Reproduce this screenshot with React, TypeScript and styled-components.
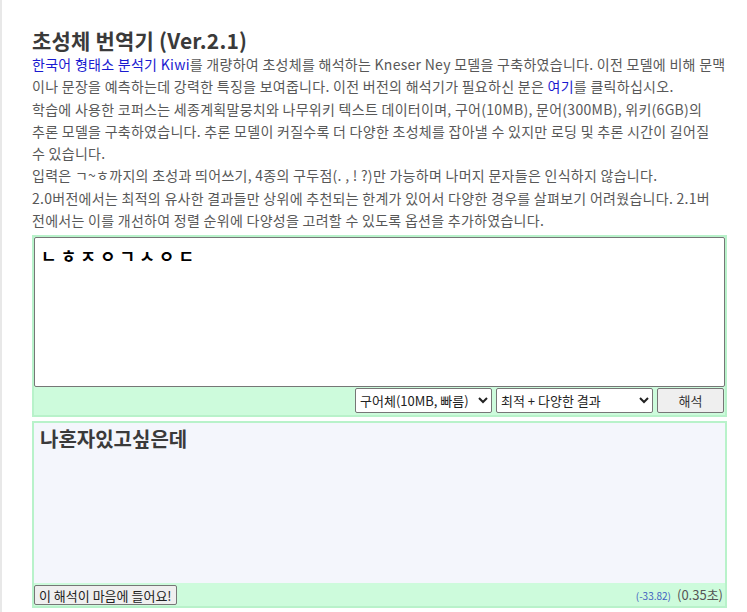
import React from 'react';
import styled, { createGlobalStyle } from 'styled-components';

const GlobalStyle = createGlobalStyle`
  html, body {
    margin: 0;
    padding: 0;
    background: #fff;
  }
  body {
    font-family: "Noto Sans CJK KR", "Noto Sans", sans-serif;
  }
`;

const Page = styled.div`
  min-height: 612px;
  box-sizing: border-box;
  border-left: 2px solid #e8e8e8;
  padding: 27px 20px 0 30px;
`;

const Content = styled.div`
  width: 695px;
`;

const Title = styled.h1`
  margin: 0;
  font-size: 21px;
  line-height: 26px;
  font-weight: bold;
  letter-spacing: 0.2px;
  color: #3a3a3a;
`;

const Intro = styled.div`
  font-size: 14px;
  line-height: 22.3px;
  color: #585858;
  letter-spacing: 0.28px;
`;

const Line = styled.span`
  display: block;
  white-space: nowrap;
`;

const Link = styled.a`
  color: #1a1ad0;
  text-decoration: none;
`;

const Panel = styled.div`
  margin-top: 4px;
  background: #cdfbdc;
  border: 2px solid #b8f2ca;
  box-sizing: border-box;
`;

const Input = styled.textarea`
  display: block;
  box-sizing: border-box;
  width: 100%;
  height: 150px;
  margin: 0;
  padding: 5px 6px;
  border: 1px solid #767676;
  border-radius: 2px;
  resize: none;
  font-family: "Noto Sans CJK KR", sans-serif;
  font-size: 17px;
  font-weight: bold;
  letter-spacing: 4px;
  color: #000;
  background: #fff;
  outline: none;
`;

const Controls = styled.div`
  display: flex;
  justify-content: flex-end;
  gap: 4px;
  padding: 1px 1px 2px 0;
`;

const Select = styled.select<{ $w: number }>`
  width: ${(p) => p.$w}px;
  height: 25px;
  font-family: "Noto Sans CJK KR", sans-serif;
  font-size: 13px;
  color: #222;
  background: #fff;
  border: 1px solid #767676;
  border-radius: 2px;
`;

const Button = styled.button<{ $w?: number }>`
  ${(p) => (p.$w ? `width: ${p.$w}px;` : '')}
  height: 25px;
  padding: 0 6px;
  font-family: "Noto Sans CJK KR", sans-serif;
  font-size: 13px;
  color: #333;
  background: #efefef;
  border: 1px solid #767676;
  border-radius: 2px;
`;

const Result = styled.div`
  height: 160px;
  box-sizing: border-box;
  padding: 2px 6px;
  background: #f4f6fc;
  font-size: 20px;
  line-height: 28px;
  font-weight: bold;
  color: #3a3a3a;
`;

const ResultBar = styled.div`
  display: flex;
  align-items: center;
  justify-content: space-between;
  height: 23px;
  padding: 0 2px 0 0;
`;

const SmallButton = styled(Button)`
  height: 20px;
  font-size: 13px;
  padding: 0 4px;
  color: #222;
`;

const Stats = styled.span`
  font-size: 13px;
  color: #555;
`;

const Score = styled.span`
  font-size: 10px;
  color: #4060c0;
  margin-right: 6px;
`;

export default function App() {
  return (
    <>
      <GlobalStyle />
      <Page>
        <Content>
          <Title>초성체 번역기 (Ver.2.1)</Title>
          <Intro>
            <Line>
              <Link href="#">한국어 형태소 분석기 Kiwi</Link>를 개량하여 초성체를 해석하는 Kneser Ney 모델을 구축하였습니다. 이전 모델에 비해 문맥
            </Line>
            <Line>
              이나 문장을 예측하는데 강력한 특징을 보여줍니다. 이전 버전의 해석기가 필요하신 분은 <Link href="#">여기</Link>를 클릭하십시오.
            </Line>
            <Line>학습에 사용한 코퍼스는 세종계획말뭉치와 나무위키 텍스트 데이터이며, 구어(10MB), 문어(300MB), 위키(6GB)의</Line>
            <Line>추론 모델을 구축하였습니다. 추론 모델이 커질수록 더 다양한 초성체를 잡아낼 수 있지만 로딩 및 추론 시간이 길어질</Line>
            <Line>수 있습니다.</Line>
            <Line>입력은 ㄱ~ㅎ까지의 초성과 띄어쓰기, 4종의 구두점(. , ! ?)만 가능하며 나머지 문자들은 인식하지 않습니다.</Line>
            <Line>2.0버전에서는 최적의 유사한 결과들만 상위에 추천되는 한계가 있어서 다양한 경우를 살펴보기 어려웠습니다. 2.1버</Line>
            <Line>전에서는 이를 개선하여 정렬 순위에 다양성을 고려할 수 있도록 옵션을 추가하였습니다.</Line>
          </Intro>
          <Panel>
            <Input defaultValue="ㄴㅎㅈㅇㄱㅅㅇㄷ" />
            <Controls>
              <Select $w={137} defaultValue="s">
                <option value="s">구어체(10MB, 빠름)</option>
                <option value="m">문어체(300MB)</option>
                <option value="w">위키(6GB)</option>
              </Select>
              <Select $w={157} defaultValue="d">
                <option value="d">최적 + 다양한 결과</option>
                <option value="o">최적 결과</option>
              </Select>
              <Button $w={67}>해석</Button>
            </Controls>
          </Panel>
          <Panel>
            <Result>나혼자있고싶은데</Result>
            <ResultBar>
              <SmallButton>이 해석이 마음에 들어요!</SmallButton>
              <Stats>
                <Score>(-33.82)</Score>(0.35초)
              </Stats>
            </ResultBar>
          </Panel>
        </Content>
      </Page>
    </>
  );
}
